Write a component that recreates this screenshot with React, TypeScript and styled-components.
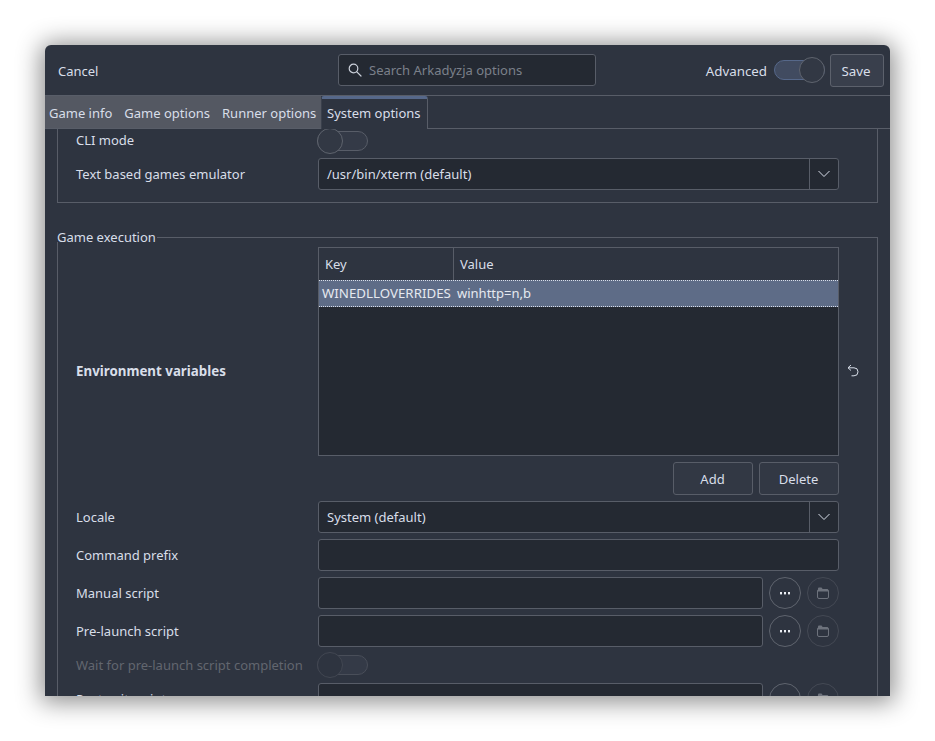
import React from "react";
import styled, { createGlobalStyle } from "styled-components";

const GlobalStyle = createGlobalStyle`
html, body {
    margin: 0;
    padding: 0;
    background: #ffffff;
}
body {
    font-family: "Noto Sans", sans-serif;
    font-size: 13px;
    color: #d8dee9;
}
`;

const Page = styled.div`
  width: 935px;
  height: 741px;
  padding: 45px 45px 45px;
  box-sizing: border-box;
  overflow: hidden;
`;

const Window = styled.div`
  width: 845px;
  height: 651px;
  background: #2e3440;
  border-radius: 6px 6px 0 0;
  box-shadow: 0 2px 24px 4px rgba(0, 0, 0, 0.45);
  display: flex;
  flex-direction: column;
  overflow: hidden;
`;

const Header = styled.header`
  height: 50px;
  flex: none;
  display: grid;
  grid-template-columns: 1fr 258px 1fr;
  align-items: center;
  padding: 0 6px 0 13px;
  border-bottom: 1px solid #585d68;
`;

const HeaderEnd = styled.div`
  display: flex;
  align-items: center;
  justify-content: flex-end;
`;

const PlainLabel = styled.span`
  line-height: 18px;
  padding-top: 1px;
`;

const AdvancedLabel = styled(PlainLabel)`
  margin-right: 7px;
  font-size: 13.33px;
`;

const SearchBox = styled.div`
  height: 32px;
  box-sizing: border-box;
  margin: -1px 0 0 -4px;
  width: 258px;
  display: flex;
  align-items: center;
  gap: 6px;
  padding: 0 8px;
  background: #242932;
  border: 1px solid #585d68;
  border-radius: 3px;
  color: #7b808a;
`;

const SaveButton = styled.button`
  width: 54px;
  height: 33px;
  margin-left: 5px;
  padding: 1px 2px 0 0;
  background: #393f4c;
  border: 1px solid #5c616c;
  border-radius: 3px;
  color: #d8dee9;
  font: inherit;
  font-size: 13.33px;
`;

const TabBar = styled.nav`
  height: 33px;
  flex: none;
  display: flex;
  box-sizing: border-box;
  border-bottom: 1px solid #585d68;
`;

const Tabs = styled.div`
  display: flex;
  background: #545862;
  width: 276px;
  box-sizing: border-box;
  padding-left: 4px;
  gap: 12px;
  align-items: center;
  height: 32px;
`;

const Tab = styled.div`
  line-height: 18px;
  padding-top: 2px;
  white-space: nowrap;
`;

const ActiveTab = styled.div`
  width: 107px;
  box-sizing: border-box;
  margin-bottom: -1px;
  border-top: 3px solid #56688a;
  border-right: 1px solid #585d68;
  border-left: 1px solid #3a404c;
  border-radius: 3px 3px 0 0;
  background: #2e3440;
  padding-left: 5px;
  line-height: 28px;
  height: 33px;
`;

const Scroller = styled.main`
  flex: 1;
  min-height: 0;
  overflow: hidden;
  padding: 0 12px;
`;

const TopFrame = styled.section`
  border: 1px solid #585d68;
  border-top: none;
  padding: 0 0 12px 18px;
  margin-bottom: 29px;
  display: flex;
  flex-direction: column;
  gap: 6px;
`;

const Frame = styled.fieldset`
  margin: 0;
  padding: 0;
  border: 1px solid #585d68;
  min-width: 0;
`;

const FrameTitle = styled.legend`
  margin-left: -1px;
  padding: 0 1px 0 0;
  line-height: 10px;
  height: 10px;
  background: #2e3440;
`;

const FrameBody = styled.div`
  padding: 5px 0 0 18px;
  display: flex;
  flex-direction: column;
  gap: 6px;
`;

const Row = styled.div<{ $slim?: boolean }>`
  display: flex;
  align-items: center;
  min-height: ${(p) => (p.$slim ? "24px" : "32px")};
`;

const SlimRow = styled(Row)`
  min-height: 23px;
  height: 23px;
`;

const Label = styled.label<{ $bold?: boolean; $disabled?: boolean }>`
  width: 241px;
  flex: none;
  font-weight: ${(p) => (p.$bold ? 700 : 400)};
  font-size: ${(p) => (p.$bold ? "13.33px" : "13px")};
  color: ${(p) => (p.$disabled ? "#62666f" : "#d8dee9")};
  line-height: 18px;
`;

const CliLabel = styled(Label)`
  margin-top: -2px;
`;

const Control = styled.div`
  width: 521px;
  margin-left: 1px;
  flex: none;
  display: flex;
  gap: 6px;
`;

const Input = styled.div`
  flex: 1;
  min-width: 0;
  height: 32px;
  box-sizing: border-box;
  background: #242932;
  border: 1px solid #585d68;
  border-radius: 3px;
  padding: 0 8px;
  line-height: 30px;
`;

const Combo = styled.div`
  flex: 1;
  height: 32px;
  box-sizing: border-box;
  background: #242932;
  border: 1px solid #585d68;
  border-radius: 3px;
  display: flex;
  line-height: 30px;
`;

const ComboValue = styled.div`
  flex: 1;
  padding-left: 8px;
`;

const ComboArrow = styled.div`
  width: 28px;
  border-left: 1px solid #585d68;
  display: flex;
  align-items: center;
  justify-content: center;
`;

const SwitchTrack = styled.div<{ $on?: boolean; $disabled?: boolean }>`
  position: relative;
  width: 51px;
  height: 20px;
  box-sizing: border-box;
  background: ${(p) => (p.$on ? "#414b60" : "#343a47")};
  border: 1px solid ${(p) => (p.$on ? "#56688a" : p.$disabled ? "#494e59" : "#585d68")};
  border-radius: 10px;
`;

const SwitchKnob = styled.div<{ $on?: boolean; $disabled?: boolean }>`
  position: absolute;
  top: -4px;
  ${(p) => (p.$on ? "right: -1px;" : "left: -1px;")}
  width: 26px;
  height: 26px;
  box-sizing: border-box;
  border-radius: 50%;
  background: ${(p) => (p.$disabled ? "#2e3440" : "#323844")};
  border: 1px solid ${(p) => (p.$disabled ? "#424752" : "#5f646e")};
`;

const Table = styled.div`
  height: 209px;
  box-sizing: border-box;
  background: #242932;
  border: 1px solid #585d68;
  overflow: hidden;
`;

const TableHead = styled.div`
  height: 32px;
  box-sizing: border-box;
  background: #2e3440;
  display: flex;
  line-height: 33px;
`;

const KeyHead = styled.div`
  width: 135px;
  box-sizing: border-box;
  padding-left: 6px;
  border-right: 1px solid #585d68;
`;

const ValueHead = styled.div`
  padding-left: 6px;
`;

const TableRow = styled.div`
  height: 27px;
  box-sizing: border-box;
  background: #5e6c87;
  border-top: 1px dotted #d8dee9;
  border-bottom: 1px dotted #d8dee9;
  display: flex;
  line-height: 25px;
  color: #e5e9f0;
`;

const KeyCell = styled.div`
  width: 135px;
  box-sizing: border-box;
  padding-left: 3px;
  white-space: nowrap;
  font-size: 13.3px;
`;

const ValueCell = styled.div`
  padding-left: 3px;
`;

const TableColumn = styled.div`
  width: 521px;
  margin-left: 1px;
  flex: none;
  display: flex;
  flex-direction: column;
  gap: 6px;
`;

const TableActions = styled.div`
  display: flex;
  justify-content: flex-end;
  gap: 6px;
`;

const ActionButton = styled.button`
  width: 80px;
  height: 33px;
  padding: 0 1px 0 0;
  background: #323844;
  border: 1px solid #585d68;
  border-radius: 3px;
  color: #d8dee9;
  font: inherit;
`;

const ResetIcon = styled.div`
  margin: -2px 0 0 8px;
  display: flex;
  color: #d8dee9;
`;

const RoundButton = styled.div<{ $disabled?: boolean }>`
  width: 32px;
  height: 32px;
  flex: none;
  box-sizing: border-box;
  border-radius: 50%;
  border: 1px solid ${(p) => (p.$disabled ? "#444954" : "#5f646e")};
  color: ${(p) => (p.$disabled ? "#6d727c" : "#eceff4")};
  display: flex;
  align-items: center;
  justify-content: center;
`;

const SearchIcon = () => (
  <svg width="16" height="16" viewBox="0 0 16 16" fill="none" stroke="#c9ced8" strokeWidth="1.2">
    <circle cx="6.5" cy="6.5" r="4.3" />
    <path d="M9.8 9.8 14 14" strokeLinecap="round" />
  </svg>
);

const ChevronIcon = () => (
  <svg width="14" height="8" viewBox="0 0 14 8" fill="none" stroke="#d8dee9" strokeWidth="1">
    <path d="M1.5 1 7 6.5 12.5 1" />
  </svg>
);

const UndoIcon = () => (
  <svg width="12" height="13" viewBox="0 0 12 13" fill="none" stroke="currentColor" strokeWidth="1">
    <path d="M4 1 1 3.8 4 6.5" />
    <path d="M1.2 3.8H7a3.7 3.7 0 0 1 0 8H4.5" />
  </svg>
);

const DotsIcon = () => (
  <svg width="10" height="3" viewBox="0 0 10 3" fill="currentColor">
    <rect x="0" y="0" width="2" height="2.4" />
    <rect x="4" y="0" width="2" height="2.4" />
    <rect x="8" y="0" width="2" height="2.4" />
  </svg>
);

const FolderIcon = () => (
  <svg width="12" height="12" viewBox="0 0 12 12" fill="none" stroke="currentColor" strokeWidth="1">
    <rect x="0.5" y="2.5" width="11" height="9" rx="1.5" />
    <path d="M1 3.5V1.5a1 1 0 0 1 1-1h2.5l1.5 2h5v2H1z" fill="currentColor" stroke="none" />
  </svg>
);

const Switch = ({ on, disabled }: { on?: boolean; disabled?: boolean }) => (
  <SwitchTrack $on={on} $disabled={disabled}>
    <SwitchKnob $on={on} $disabled={disabled} />
  </SwitchTrack>
);

const FileRow = ({ label }: { label: string }) => (
  <Row>
    <Label>{label}</Label>
    <Control>
      <Input />
      <RoundButton>
        <DotsIcon />
      </RoundButton>
      <RoundButton $disabled>
        <FolderIcon />
      </RoundButton>
    </Control>
  </Row>
);

export default function App() {
  return (
    <Page>
      <GlobalStyle />
      <Window>
        <Header>
          <PlainLabel>Cancel</PlainLabel>
          <SearchBox>
            <SearchIcon />
            <span>Search Arkadyzja options</span>
          </SearchBox>
          <HeaderEnd>
            <AdvancedLabel>Advanced</AdvancedLabel>
            <Switch on />
            <SaveButton>Save</SaveButton>
          </HeaderEnd>
        </Header>
        <TabBar>
          <Tabs>
            <Tab>Game info</Tab>
            <Tab>Game options</Tab>
            <Tab>Runner options</Tab>
          </Tabs>
          <ActiveTab>System options</ActiveTab>
        </TabBar>
        <Scroller>
          <TopFrame>
            <SlimRow>
              <CliLabel>CLI mode</CliLabel>
              <Switch />
            </SlimRow>
            <Row>
              <Label>Text based games emulator</Label>
              <Control>
                <Combo>
                  <ComboValue>/usr/bin/xterm (default)</ComboValue>
                  <ComboArrow>
                    <ChevronIcon />
                  </ComboArrow>
                </Combo>
              </Control>
            </Row>
          </TopFrame>
          <Frame>
            <FrameTitle>Game execution</FrameTitle>
            <FrameBody>
              <Row>
                <Label $bold>Environment variables</Label>
                <TableColumn>
                  <Table>
                    <TableHead>
                      <KeyHead>Key</KeyHead>
                      <ValueHead>Value</ValueHead>
                    </TableHead>
                    <TableRow>
                      <KeyCell>WINEDLLOVERRIDES</KeyCell>
                      <ValueCell>winhttp=n,b</ValueCell>
                    </TableRow>
                  </Table>
                  <TableActions>
                    <ActionButton>Add</ActionButton>
                    <ActionButton>Delete</ActionButton>
                  </TableActions>
                </TableColumn>
                <ResetIcon>
                  <UndoIcon />
                </ResetIcon>
              </Row>
              <Row>
                <Label>Locale</Label>
                <Control>
                  <Combo>
                    <ComboValue>System (default)</ComboValue>
                    <ComboArrow>
                      <ChevronIcon />
                    </ComboArrow>
                  </Combo>
                </Control>
              </Row>
              <Row>
                <Label>Command prefix</Label>
                <Control>
                  <Input />
                </Control>
              </Row>
              <FileRow label="Manual script" />
              <FileRow label="Pre-launch script" />
              <Row $slim>
                <Label $disabled>Wait for pre-launch script completion</Label>
                <Switch disabled />
              </Row>
              <FileRow label="Post-exit script" />
            </FrameBody>
          </Frame>
        </Scroller>
      </Window>
    </Page>
  );
}
